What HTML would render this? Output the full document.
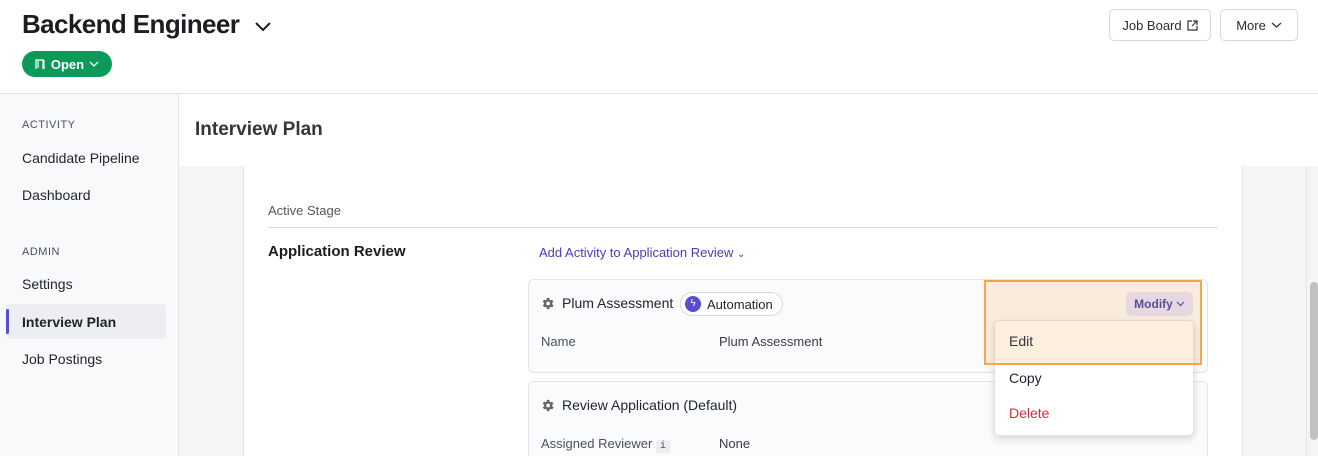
<!DOCTYPE html>
<html><head><style>
*{box-sizing:border-box;margin:0;padding:0}
html,body{width:1318px;height:456px;overflow:hidden}
body{font-family:"Liberation Sans",sans-serif;background:#fff;position:relative;color:#1f2328}
.a{position:absolute}
.btn{position:absolute;border:1px solid #d6d8de;border-radius:5px;background:#fff;font-size:13px;color:#2b2d33;display:flex;align-items:center;justify-content:center;gap:5px}
.side .it{position:absolute;left:22px;font-size:14px;color:#1f2328}
.side .lab{position:absolute;left:22px;font-size:11px;color:#4b4f58;letter-spacing:.5px}
</style></head><body>
<div class="a" style="left:22px;top:9px;font-size:26px;font-weight:bold;color:#1c1d21;letter-spacing:-.6px">Backend Engineer</div>
<svg class="a" style="left:254px;top:20px" width="18" height="12"><path d="M2 3l7 7 7-7" stroke="#1c1d21" stroke-width="2" fill="none"/></svg>
<div class="a" style="left:22px;top:51px;width:90px;height:26px;border-radius:13px;background:#0c9a5a;color:#fff;font-size:13px;font-weight:bold;display:flex;align-items:center;justify-content:center;gap:5px">
<svg width="11" height="12"><path d="M1 11V2h7v9M3 3v7M9 2v9" stroke="#fff" stroke-width="1.2" fill="none"/></svg>Open<svg width="10" height="8"><path d="M1 2l4 4 4-4" stroke="#fff" stroke-width="1.3" fill="none"/></svg></div>
<div class="btn" style="left:1109px;top:9px;width:102px;height:32px">Job Board <svg width="11" height="11"><path d="M5 1H1v9h9V6M6 1h4v4M10 1L5 6" stroke="#333" stroke-width="1.2" fill="none"/></svg></div>
<div class="btn" style="left:1220px;top:9px;width:78px;height:32px">More <svg width="11" height="8"><path d="M1 2l4.5 4 4.5-4" stroke="#333" stroke-width="1.3" fill="none"/></svg></div>
<div class="a" style="left:0;top:93px;width:1318px;height:1px;background:#e3e4e8"></div>
<div class="a side" style="left:0;top:94px;width:179px;height:362px;background:#f8f9fb;border-right:1px solid #e3e4e8">
<div class="lab" style="top:25px">ACTIVITY</div>
<div class="it" style="top:56px">Candidate Pipeline</div>
<div class="it" style="top:93px">Dashboard</div>
<div class="lab" style="top:152px">ADMIN</div>
<div class="it" style="top:182px">Settings</div>
<div class="a" style="left:6px;top:210px;width:160px;height:35px;background:#eceef2;border-radius:4px"></div>
<div class="a" style="left:6px;top:215px;width:3px;height:25px;background:#5a4bd1;border-radius:2px"></div>
<div class="it" style="top:220px;font-weight:bold">Interview Plan</div>
<div class="it" style="top:257px">Job Postings</div>
</div>
<div class="a" style="left:195px;top:119px;font-size:19px;font-weight:bold;color:#34363c">Interview Plan</div>
<div class="a" style="left:179px;top:166px;width:65px;height:290px;background:#f4f5f7;border-right:1px solid #e3e4e8"></div>
<div class="a" style="left:1242px;top:166px;width:76px;height:290px;background:#f4f5f7;border-left:1px solid #e3e4e8"></div>
<div class="a" style="left:1306px;top:166px;width:1px;height:290px;background:#e3e4e8"></div>
<div class="a" style="left:1310px;top:282px;width:8px;height:158px;background:#c1c1c1;border-radius:4px"></div>
<div class="a" style="left:268px;top:203px;font-size:13px;color:#55575e">Active Stage</div>
<div class="a" style="left:268px;top:227px;width:950px;height:1px;background:#d8dae0"></div>
<div class="a" style="left:268px;top:243px;font-size:15px;font-weight:bold;color:#1c1d21">Application Review</div>
<div class="a" style="left:539px;top:245px;font-size:13px;color:#4a3bb8">Add Activity to Application Review <span style="font-size:10px">&#8964;</span></div>
<div class="a" style="left:528px;top:279px;width:680px;height:94px;border:1px solid #e3e4e8;border-radius:6px;background:#fafbfc"></div>
<div class="a" style="left:528px;top:381px;width:680px;height:90px;border:1px solid #e3e4e8;border-radius:6px;background:#fafbfc"></div>
<svg class="a" style="left:540px;top:296px" width="15" height="15" viewBox="0 0 24 24"><path fill="#666" d="M19.4 13a7.5 7.5 0 000-2l2.1-1.6-2-3.5-2.5 1a7.3 7.3 0 00-1.7-1L15 3h-4l-.4 2.7a7.3 7.3 0 00-1.7 1l-2.5-1-2 3.5L6.6 11a7.5 7.5 0 000 2l-2.1 1.6 2 3.5 2.5-1a7.3 7.3 0 001.7 1L11 21h4l.4-2.7a7.3 7.3 0 001.7-1l2.5 1 2-3.5zM13 15a3 3 0 110-6 3 3 0 010 6z"/></svg>
<div class="a" style="left:562px;top:295px;font-size:14px">Plum Assessment</div>
<div class="a" style="left:680px;top:292px;width:103px;height:24px;border:1px solid #d6d8de;border-radius:12px;background:#fff;font-size:13px;display:flex;align-items:center;padding-left:4px;gap:6px"><span style="width:16px;height:16px;border-radius:8px;background:#5a4bd1;color:#fff;font-size:10px;text-align:center;line-height:16px">ϟ</span>Automation</div>
<div class="a" style="left:541px;top:334px;font-size:13px;color:#4b4f58">Name</div>
<div class="a" style="left:719px;top:334px;font-size:13px;color:#3a3c42">Plum Assessment</div>
<svg class="a" style="left:540px;top:398px" width="15" height="15" viewBox="0 0 24 24"><path fill="#666" d="M19.4 13a7.5 7.5 0 000-2l2.1-1.6-2-3.5-2.5 1a7.3 7.3 0 00-1.7-1L15 3h-4l-.4 2.7a7.3 7.3 0 00-1.7 1l-2.5-1-2 3.5L6.6 11a7.5 7.5 0 000 2l-2.1 1.6 2 3.5 2.5-1a7.3 7.3 0 001.7 1L11 21h4l.4-2.7a7.3 7.3 0 001.7-1l2.5 1 2-3.5zM13 15a3 3 0 110-6 3 3 0 010 6z"/></svg>
<div class="a" style="left:562px;top:397px;font-size:14px">Review Application (Default)</div>
<div class="a" style="left:541px;top:436px;font-size:13px;color:#4b4f58">Assigned Reviewer <span style="display:inline-block;background:#eceef0;font-family:'Liberation Mono',monospace;font-size:10px;padding:1px 4px;border-radius:2px">i</span></div>
<div class="a" style="left:719px;top:436px;font-size:13px;color:#3a3c42">None</div>
<div class="a" style="left:994px;top:320px;width:200px;height:116px;background:#fff;border:1px solid #e0e1e5;border-radius:5px;box-shadow:0 3px 8px rgba(0,0,0,.15)"></div>
<div class="a" style="left:984px;top:280px;width:218px;height:85px;background:rgba(245,180,110,.22);border:2px solid #f5a54a"></div>
<div class="a" style="left:1126px;top:292px;width:67px;height:24px;background:#e5d8e0;border-radius:5px;font-size:12px;color:#5b4e9a;font-weight:bold;display:flex;align-items:center;justify-content:center;gap:3px">Modify <svg width="9" height="6"><path d="M1 1l3.5 3.5L8 1" stroke="#5b4e9a" stroke-width="1.2" fill="none"/></svg></div>
<div class="a" style="left:1009px;top:333px;font-size:14px;color:#3a3036">Edit</div>
<div class="a" style="left:1009px;top:370px;font-size:14px;color:#1f2330">Copy</div>
<div class="a" style="left:1009px;top:405px;font-size:14px;color:#d92b3a">Delete</div>
</body></html>
